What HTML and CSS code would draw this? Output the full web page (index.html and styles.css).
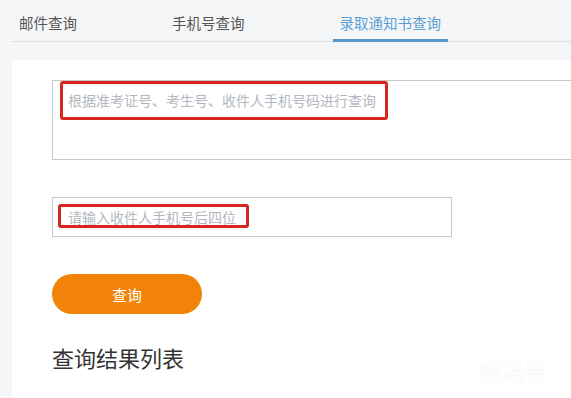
FILE: index.html
```html
<!DOCTYPE html>
<html lang="zh-CN">
<head>
<meta charset="utf-8">
<title>录取通知书查询</title>
<link rel="stylesheet" href="styles.css">
</head>
<body>
<nav class="tabs">
  <a class="tab">邮件查询</a>
  <a class="tab">手机号查询</a>
  <a class="tab active">录取通知书查询</a>
</nav>
<main class="panel">
  <div class="field field-area">
    <textarea class="area" placeholder="根据准考证号、考生号、收件人手机号码进行查询"></textarea>
    <span class="mark mark-area"></span>
  </div>
  <div class="field field-input">
    <input class="input" type="text" placeholder="请输入收件人手机号后四位">
    <span class="mark mark-input"></span>
  </div>
  <button class="btn">查询</button>
  <h2 class="title">查询结果列表</h2>
  <span class="watermark">斑马号</span>
</main>
</body>
</html>
```
FILE: styles.css
```css
html, body {
  margin: 0;
  padding: 0;
  height: 100%;
  overflow: hidden;
}
body {
  background: #f5f6f8;
  font-family: "Noto Sans CJK SC", "Noto Sans", sans-serif;
  color: #333;
}
.tabs {
  display: flex;
  gap: 81px;
  margin-left: 11px;
  height: 41px;
  border-bottom: 1px solid #dcdfe3;
  padding-left: 1px;
}
.tab {
  display: block;
  padding: 13px 7px 0;
  font-size: 14.5px;
  line-height: 20px;
  color: #555;
  box-sizing: border-box;
  height: 42px;
}
.tab.active {
  color: #5a9fd4;
  border-bottom: 3px solid #5a96c8;
}
.panel {
  position: relative;
  margin: 18px 0 0 12px;
  background: #fff;
  height: 338px;
  padding: 20px 0 0 40px;
  box-sizing: border-box;
  overflow: hidden;
}
.field {
  position: relative;
}
.area {
  display: block;
  width: 580px;
  height: 80px;
  box-sizing: border-box;
  border: 1px solid #c4c6ca;
  padding: 9px 15px;
  font-family: inherit;
  font-size: 14px;
  line-height: 20px;
  resize: none;
  outline: none;
  margin: 0;
}
.input {
  display: block;
  width: 400px;
  height: 40px;
  box-sizing: border-box;
  border: 1px solid #c4c6ca;
  padding: 0 15px;
  font-family: inherit;
  font-size: 14px;
  outline: none;
  margin: 37px 0 0;
}
.area::placeholder, .input::placeholder {
  color: #b3b7bf;
}
.mark {
  position: absolute;
  border: 3px solid #d7261e;
  border-radius: 3px;
  box-sizing: border-box;
  pointer-events: none;
}
.mark-area {
  left: 8px;
  top: 1px;
  width: 328px;
  height: 39px;
}
.mark-input {
  left: 6px;
  top: 7px;
  width: 191px;
  height: 24px;
}
.btn {
  display: block;
  margin-top: 37px;
  width: 150px;
  height: 40px;
  border: none;
  border-radius: 20px;
  background: #f08308;
  color: #fff;
  font-family: inherit;
  font-size: 15px;
  padding: 0;
}
.title {
  margin: 31px 0 0;
  font-size: 22px;
  font-weight: normal;
  line-height: 24px;
  color: #333;
}
.watermark {
  position: absolute;
  left: 466px;
  top: 294px;
  font-size: 23px;
  font-weight: bold;
  color: rgba(255,255,255,0.95);
  text-shadow: 0 0 2px rgba(0,0,0,0.08);
}
```
